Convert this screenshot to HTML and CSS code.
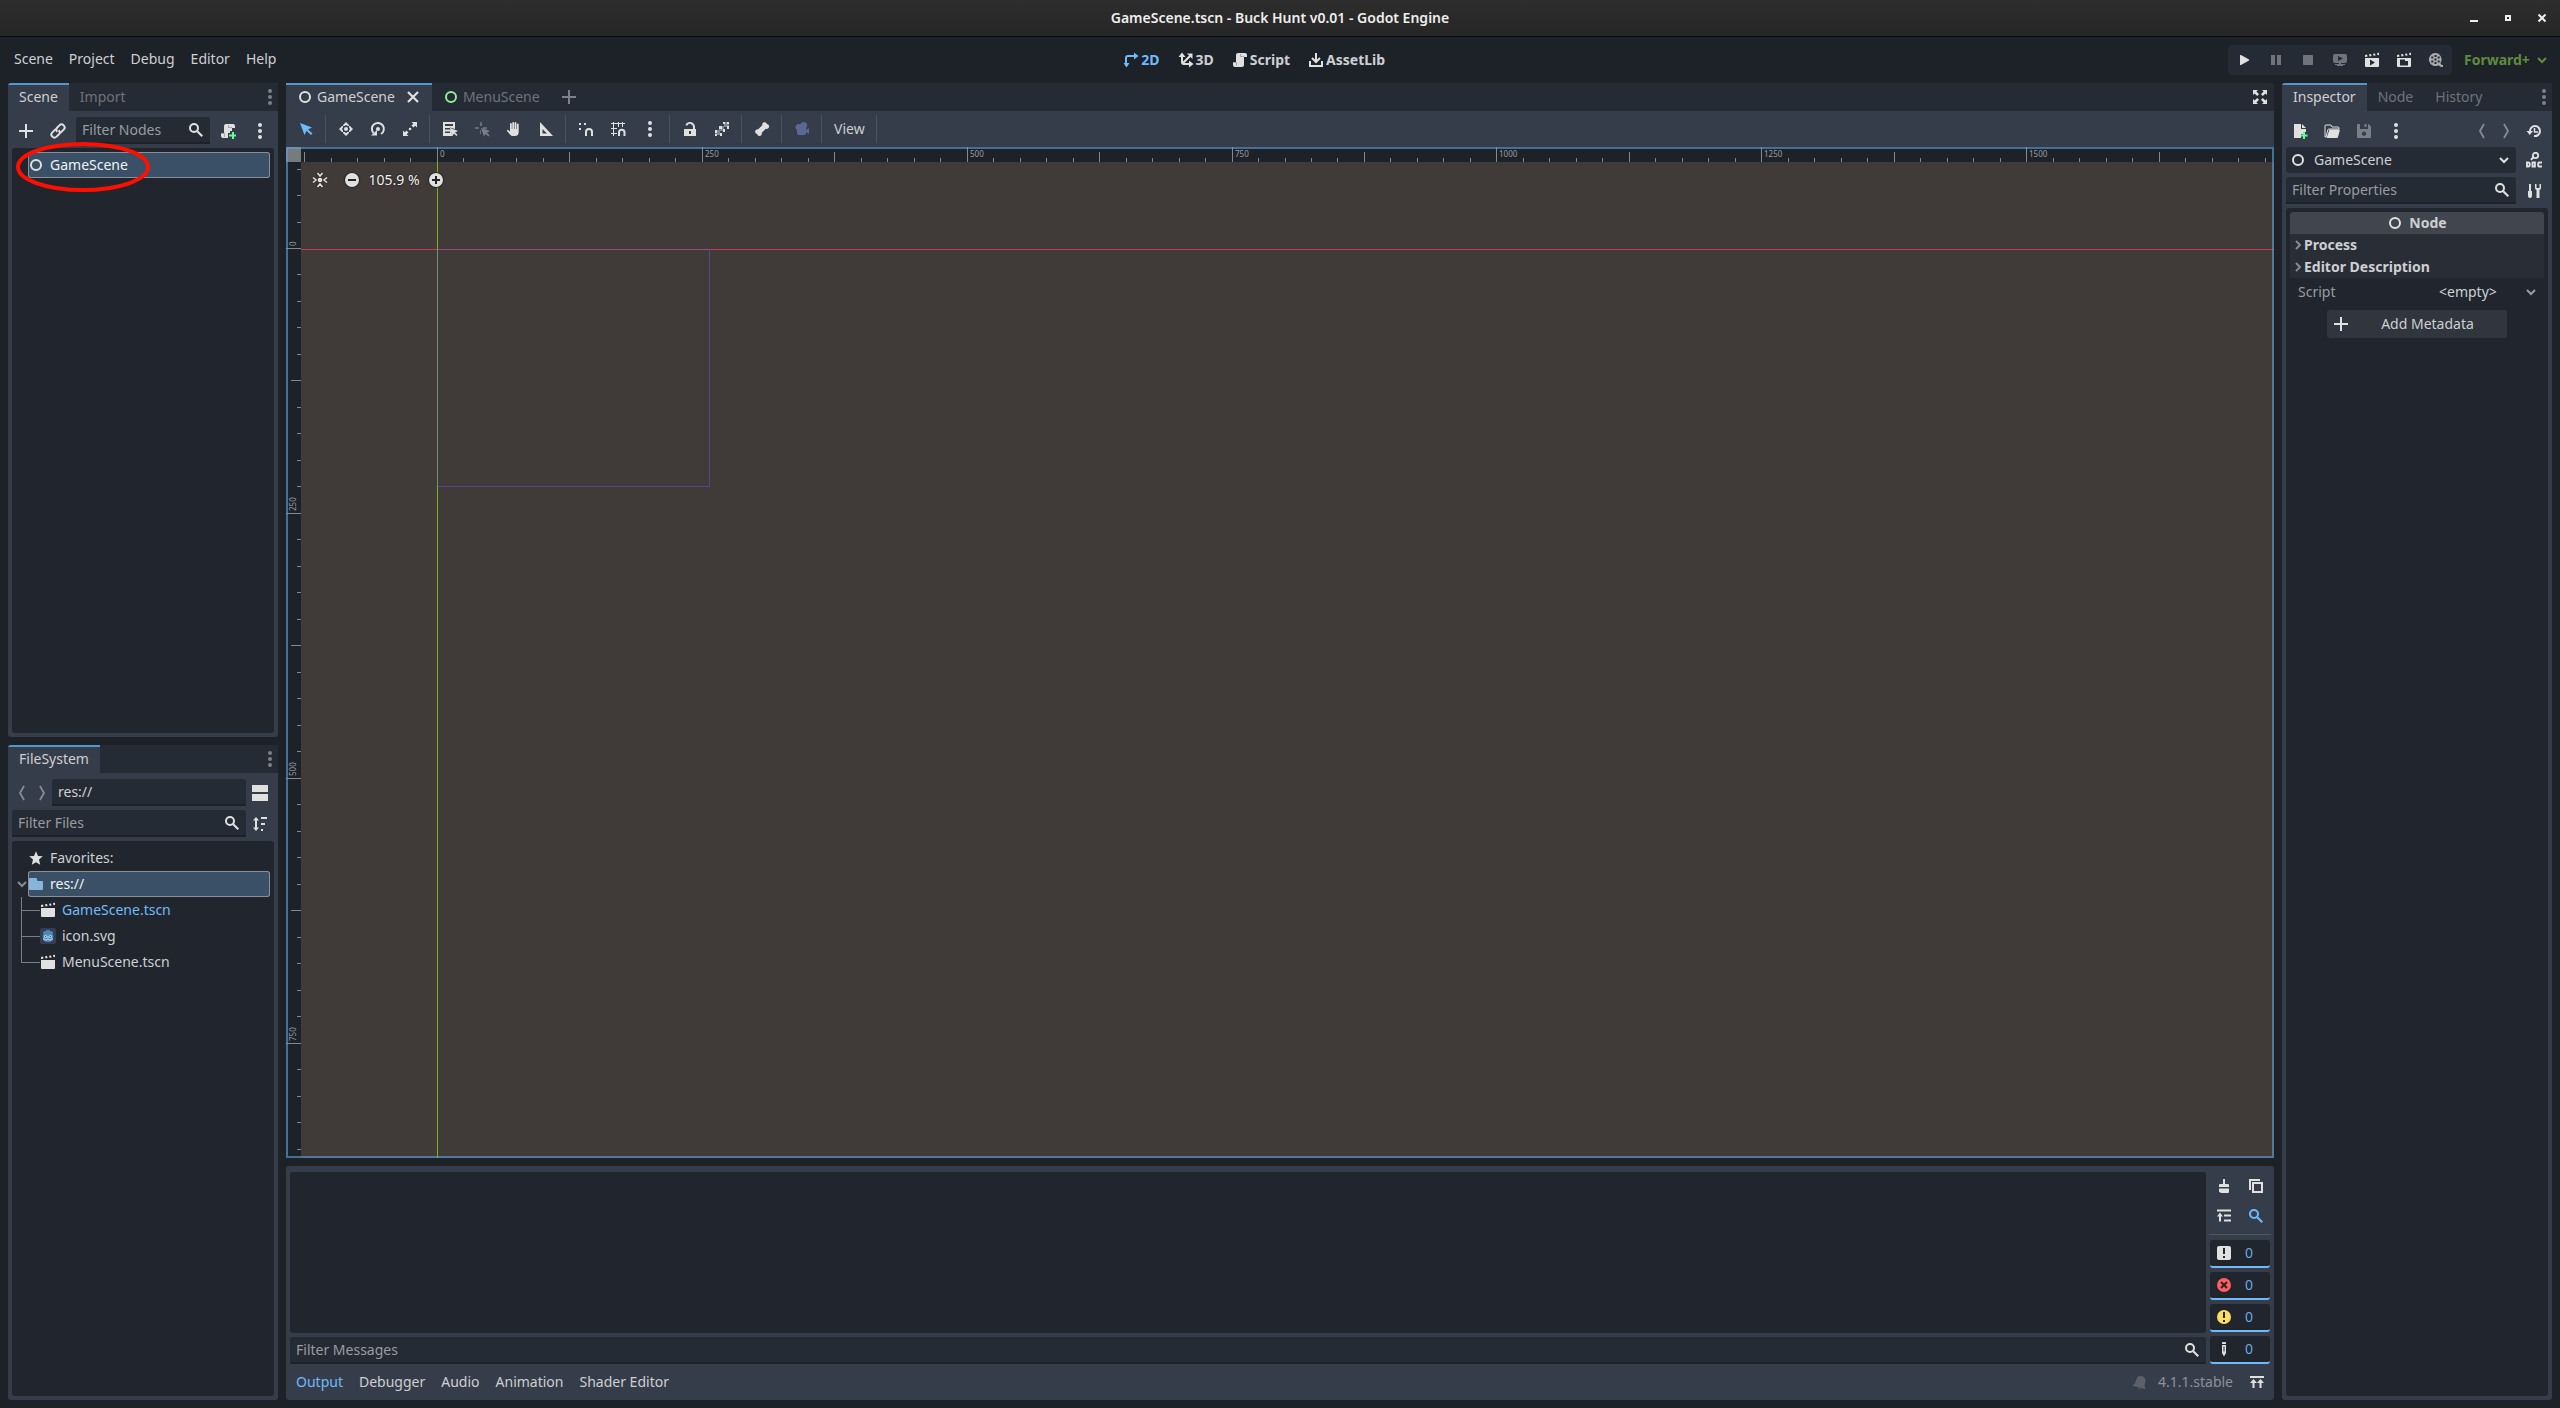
FILE: index.html
```html
<!DOCTYPE html>
<html lang="en">
<head>
<meta charset="utf-8">
<title>GameScene.tscn - Buck Hunt v0.01 - Godot Engine</title>
<link rel="stylesheet" href="styles.css">
</head>
<body>
<svg class="sprite" aria-hidden="true">
  <symbol id="i-add" viewBox="0 0 16 16"><path d="M7 1v6H1v2h6v6h2V9h6V7H9V1z"/></symbol>
  <symbol id="i-link" viewBox="0 0 16 16"><g fill="none" stroke="currentColor" stroke-width="2" transform="rotate(-45 8 8)"><path d="M8 5H3a3 3 0 0 0 0 6h3a3 3 0 0 0 3-3"/><path d="M8 11h5a3 3 0 0 0 0-6h-3a3 3 0 0 0-3 3"/></g></symbol>
  <symbol id="i-search" viewBox="0 0 16 16"><circle cx="6" cy="6" r="4" fill="none" stroke="currentColor" stroke-width="2"/><path d="M8.500 10 10 8.500 15 13.500 13.500 15z"/></symbol>
  <symbol id="i-kebab" viewBox="0 0 16 16"><circle cx="8" cy="2" r="2"/><circle cx="8" cy="8" r="2"/><circle cx="8" cy="14" r="2"/></symbol>
  <symbol id="i-node" viewBox="0 0 16 16"><circle cx="8" cy="8" r="5" fill="none" stroke="currentColor" stroke-width="2"/></symbol>
  <symbol id="i-close" viewBox="0 0 16 16"><path d="M3 3l10 10m0-10l-10 10" stroke="currentColor" stroke-width="2.200" fill="none"/></symbol>
  <symbol id="i-script" viewBox="0 0 16 16"><path d="M6 1a2 2 0 0 0-2 2v7H1v3a2 2 0 0 0 2 2h7a2 2 0 0 0 2-2V5h3V3a2 2 0 0 0-2-2z"/><path d="M4 10H1v1h3v3h1v-4zM8 2v3h4V4H9V2z" fill="#a8a8aa"/></symbol>
  <symbol id="i-scriptadd" viewBox="0 0 16 16"><path d="M6 1a2 2 0 0 0-2 2v7H1v3a2 2 0 0 0 2 2h5v-5h2V8h2V5h3V3a2 2 0 0 0-2-2z"/><path d="M4 10H1v1h3v3h1v-4zM8 2v3h4V4H9V2z" fill="#a8a8aa"/><path d="M12 9v2.500h-3v2h3V16h2v-2.500h2v-2h-2V9z" fill="#5fff97"/></symbol>
  <symbol id="i-back" viewBox="0 0 16 16"><path d="M10 1 6 8l4 7" fill="none" stroke="currentColor" stroke-width="1.800"/></symbol>
  <symbol id="i-forward" viewBox="0 0 16 16"><path d="M6 1l4 7-4 7" fill="none" stroke="currentColor" stroke-width="1.800"/></symbol>
  <symbol id="i-split" viewBox="0 0 16 16"><path d="M0 0h16v7H0zM0 9h16v7H0z"/></symbol>
  <symbol id="i-sort" viewBox="0 0 16 16"><path d="M4 1 1 4.500h2v7H1L4 15l3-3.500H5v-7h2zM9 1h6v2H9zM9 7h4v2H9zM9 13h2v2H9z"/></symbol>
  <symbol id="i-star" viewBox="0 0 16 16"><path d="M8 1.200 6 6 1.200 6.300 5 9.600 3.800 14.800 8 12.200l4.200 2.600L11 9.600l3.800-3.300L10 6z"/></symbol>
  <symbol id="i-folder" viewBox="0 0 16 16"><path d="M2 2a1 1 0 0 0-1 1v10a1 1 0 0 0 1 1h12a1 1 0 0 0 1-1V6a1 1 0 0 0-1-1h-4a1 1 0 0 1-1-1V3a1 1 0 0 0-1-1z"/></symbol>
  <symbol id="i-scene" viewBox="0 0 16 16"><path d="M1 6h14v8a1 1 0 0 1-1 1H2a1 1 0 0 1-1-1zM1 3l2-.4.600 2L1.600 5H1zM5 2.300l2-.3.600 2-2 .4zM9 1.700l2-.3.600 2-2 .3zM13 1.100l2-.3V3l-1.400.2z"/></symbol>
  <symbol id="i-godot" viewBox="0 0 16 16"><rect width="16" height="16" rx="2" fill="#363d52"/><path d="M3 4l1.500-1 1 1L6 2.200l1.500-.4L8 3l.5-1.200 1.500.4.500 1.800 1-1L13 4l-.4 2.500.6.500v4c0 2-2.500 3-5.200 3s-5.200-1-5.200-3V7l.6-.5z" fill="#478cbf"/><circle cx="5.600" cy="8.500" r="1.300" fill="#fff"/><circle cx="10.400" cy="8.500" r="1.300" fill="#fff"/><circle cx="5.700" cy="8.500" r=".7" fill="#414042"/><circle cx="10.300" cy="8.500" r=".7" fill="#414042"/><path d="M3 11h2v1h2v-1h2v1h2v-1h2" fill="none" stroke="#dbe8f2" stroke-width=".7"/><path d="M7.600 8h.8v2h-.8z" fill="#fff"/></symbol>
  <symbol id="i-down" viewBox="0 0 16 16"><path d="M4 6l4 4 4-4" fill="none" stroke="currentColor" stroke-width="2"/></symbol>
  <symbol id="i-right" viewBox="0 0 16 16"><path d="M6 4l4 4-4 4" fill="none" stroke="currentColor" stroke-width="2"/></symbol>
  <symbol id="i-2d" viewBox="0 0 16 16"><path d="M3 12V6a2 2 0 0 1 2-2h7" fill="none" stroke="currentColor" stroke-width="2"/><path d="M0.500 11h6L3.500 15.500zM11 .500v7L15.500 4z"/></symbol>
  <symbol id="i-3d" viewBox="0 0 16 16"><path d="M4 3v7a2 2 0 0 0 2 2h7M5 11l7-7" fill="none" stroke="currentColor" stroke-width="2"/><path d="M4 0.500.500 5h7zM11 8.500v7L15.500 12zM9 1.500h5.500V7z"/></symbol>
  <symbol id="i-asset" viewBox="0 0 16 16"><path d="M8 1v9M4 6l4 4 4-4M2 9v5h12V9" fill="none" stroke="currentColor" stroke-width="2"/></symbol>
  <symbol id="i-play" viewBox="0 0 16 16"><path d="M4 3.500c0-.6.500-.7 1-.4l8 4.500q.5.400 0 .8l-8 4.500c-.5.300-1 .2-1-.4z"/></symbol>
  <symbol id="i-pause" viewBox="0 0 16 16"><path d="M3 3h4v10H3zM9 3h4v10H9z"/></symbol>
  <symbol id="i-stop" viewBox="0 0 16 16"><rect x="3" y="3" width="10" height="10" rx="1"/></symbol>
  <symbol id="i-remote" viewBox="0 0 16 16"><path fill-rule="evenodd" d="M3 2a2 2 0 0 0-2 2v5a2 2 0 0 0 2 2h4v1H3v1h2v1h6v-1h2v-1H9v-1h4a2 2 0 0 0 2-2V4a2 2 0 0 0-2-2zm3 2 5 2.500L6 9z"/></symbol>
  <symbol id="i-playscene" viewBox="0 0 16 16"><path fill-rule="evenodd" d="M1 6h14v8a1 1 0 0 1-1 1H2a1 1 0 0 1-1-1zm5 1.500v6l5-3zM1 3l2-.4.600 2L1.600 5H1zM5 2.300l2-.3.600 2-2 .4zM9 1.700l2-.3.600 2-2 .3zM13 1.100l2-.3V3l-1.400.2z"/></symbol>
  <symbol id="i-playcustom" viewBox="0 0 16 16"><path fill-rule="evenodd" d="M1 6h14v8a1 1 0 0 1-1 1H2a1 1 0 0 1-1-1zm3 1.500v6h8V9H9V7.500zM1 3l2-.4.600 2L1.600 5H1zM5 2.300l2-.3.600 2-2 .4zM9 1.700l2-.3.600 2-2 .3zM13 1.100l2-.3V3l-1.400.2z"/></symbol>
  <symbol id="i-movie" viewBox="0 0 16 16"><path fill-rule="evenodd" d="M7.500 1a6.500 6.500 0 1 0 3 12.200l2.500 1.800h2v-2h-1.200l-1.400-1.800A6.500 6.500 0 0 0 7.500 1zM6.500 3h2v2h-2zM6.500 6.500h2v2h-2zM6.500 10h2v2h-2zM3.300 4.500h2v2h-2zM3.300 8.500h2v2h-2zM9.700 4.500h2v2h-2zM9.700 8.500h2v2h-2z"/></symbol>
  <symbol id="i-expand" viewBox="0 0 16 16"><path d="M1 1h5L4.400 2.600 7 5.200 5.200 7 2.600 4.400 1 6zM15 1h-5l1.600 1.600L9 5.200 10.800 7l2.600-2.600L15 6zM1 15h5l-1.600-1.600L7 10.800 5.200 9l-2.600 2.600L1 10zM15 15h-5l1.600-1.600L9 10.800 10.800 9l2.600 2.600L15 10z"/></symbol>
  <symbol id="i-select" viewBox="0 0 16 16"><path d="M2 2l4.500 12 2-4.200L13 14l1.500-1.500L10 8.500l4-2z"/></symbol>
  <symbol id="i-move" viewBox="0 0 16 16"><circle cx="8" cy="8" r="2"/><path d="M8 1 5 4v1h1.500l1.500-1 1.500 1H11V4zM1 8l3 3h1V9.500L4 8l1-1.500V5H4zM15 8l-3-3h-1v1.500l1 1.500-1 1.500V11h1zM8 15l3-3v-1H9.500L8 12l-1.500-1H5v1z"/></symbol>
  <symbol id="i-rotate" viewBox="0 0 16 16"><path d="M11 13a6 6 0 1 0-7.500-1" fill="none" stroke="currentColor" stroke-width="2"/><path d="M1 14.500h6V9z"/><circle cx="8" cy="8" r="2"/></symbol>
  <symbol id="i-scale" viewBox="0 0 16 16"><path d="M9.500 1H15v5.500l-1.800-1.800-1.700 1.800-2-2 1.800-1.700zM1 9.500V15h5.500l-1.800-1.800 1.800-1.700-2-2-1.700 1.800z"/><circle cx="8" cy="8" r="1.300"/></symbol>
  <symbol id="i-list" viewBox="0 0 16 16"><path fill-rule="evenodd" d="M1 1h12v7L8 6.500 10.500 15H1zm2 2v2h8V3zm0 4v1.500h5V7zm0 3.500V12h5v-1.500z"/><path d="M8 7l2.500 8 1.500-2.500L14.500 15l1-1.200-2.500-2.300L16 10z"/></symbol>
  <symbol id="i-pivot" viewBox="0 0 16 16"><path d="M6 1h2v4H6zM1 6h4v2H1zM9 6h4v2H9zM6 9h1v4H6z" opacity=".7"/><path d="M7 7l3 8.500 1.500-2.500 3 2.500 1-1.200-2.600-2.500L16 10z"/></symbol>
  <symbol id="i-hand" viewBox="0 0 16 16"><path d="M4 3q0-1 .9-1t.9 1v5h.5V2q0-1 .9-1t.9 1v6h.5V2q0-1 .9-1t.9 1v6h.5V3.500q0-1 .9-1t.9 1V11q0 4-4 4H7q-2 0-3-1.500L1 10q-.5-1.500 1.200-1L4 10.500z"/></symbol>
  <symbol id="i-ruler" viewBox="0 0 16 16"><path fill-rule="evenodd" d="M2 1v14h13zm2.500 7L9 12.500H4.500z"/></symbol>
  <symbol id="i-snap" viewBox="0 0 16 16"><path d="M1 2h2v2H1zM1 7h2v2H1zM6 2h2v2H6z"/><path d="M8 15v-4a3 3 0 0 1 6 0v4" fill="none" stroke="currentColor" stroke-width="2"/></symbol>
  <symbol id="i-grid" viewBox="0 0 16 16"><path d="M3.500 1v14M8.500 1v5M12.500 1v5M1 2.500h14M1 7.500h6M1 12.500h6" fill="none" stroke="currentColor"/><path d="M9 15v-4a2.800 2.800 0 0 1 5.500 0v4" fill="none" stroke="currentColor" stroke-width="2"/></symbol>
  <symbol id="i-unlock" viewBox="0 0 16 16"><path fill-rule="evenodd" d="M8 1a5 5 0 0 0-4.600 3l1.800.8A3 3 0 0 1 11 6v2H2v7h12V8h-1V6a5 5 0 0 0-5-5zM7 10h2v3H7z"/></symbol>
  <symbol id="i-group" viewBox="0 0 16 16"><path d="M5 5h5v5H5zM10 1h5v5h-5zM1 9h5v5H1z" opacity=".45"/><path d="M9 1h2v2H9zM13 1h2v2h-2zM5 5h3v3H5zM13 5h2v3h-2zM9 8h2v3H9zM1 9h2v3H1zM6 12h2v3H6zM1 13h2v2H1z"/></symbol>
  <symbol id="i-bone" viewBox="0 0 16 16"><path d="M10.500 1.200a2.300 2.300 0 0 0-2.200 3L4.200 8.300a2.500 2.500 0 0 0-3 3A2.300 2.300 0 0 0 3.200 13a2.300 2.300 0 0 0 1.700 2 2.500 2.500 0 0 0 2.900-3.200l4-4a2.500 2.500 0 0 0 3.200-3A2.300 2.300 0 0 0 12.900 3a2.300 2.300 0 0 0-2.400-1.800z"/></symbol>
  <symbol id="i-camera" viewBox="0 0 16 16"><path d="M9.500 1a3.500 3.500 0 0 0-3.300 2.500A3 3 0 1 0 3 8.800V12a2 2 0 0 0 2 2h5a2 2 0 0 0 2-2v-1l3 2V7l-3 2V7.200A3.500 3.500 0 0 0 9.500 1z"/></symbol>
  <symbol id="i-center" viewBox="0 0 16 16"><circle cx="8" cy="8" r="2.300"/><path d="M5.500 1 8 4 10.500 1M5.500 15 8 12l2.500 3M1 5.500 4 8 1 10.500M15 5.500 12 8l3 2.500" fill="none" stroke="currentColor" stroke-width="1.600"/></symbol>
  <symbol id="i-minus" viewBox="0 0 16 16"><circle cx="8" cy="8" r="7.500" fill="#222"/><circle cx="8" cy="8" r="7"/><path d="M4 7h8v2H4z" fill="#222"/></symbol>
  <symbol id="i-plus" viewBox="0 0 16 16"><circle cx="8" cy="8" r="7.500" fill="#222"/><circle cx="8" cy="8" r="7"/><path d="M4 7h3V4h2v3h3v2H9v3H7V9H4z" fill="#222"/></symbol>
  <symbol id="i-new" viewBox="0 0 16 16"><path d="M2 1h7v5h5v3h-3v2H9v4H2zM10 1l4 4h-4z"/><path d="M11 9v2.500H8.500v2H11V16h2v-2.500h2.500v-2H13V9z" fill="#5fff97"/></symbol>
  <symbol id="i-open" viewBox="0 0 16 16"><path d="M1 14V3q0-1 1-1h5l1 2h6q1 0 1 1v1H5q-1 0-1.200 1L2 14z" fill="none" stroke="currentColor"/><path d="M5.500 6.500H15q1 0 .8 1L14 14q-.2 1-1.200 1H2.500z"/></symbol>
  <symbol id="i-save" viewBox="0 0 16 16"><path fill-rule="evenodd" d="M1 2a1 1 0 0 1 1-1h10.500L15 3.500V14a1 1 0 0 1-1 1H2a1 1 0 0 1-1-1zm3-1v5h8V1h-1.500v3h-2V1zm4 7.500a2.200 2.200 0 1 0 .1 0z"/></symbol>
  <symbol id="i-history" viewBox="0 0 16 16"><path d="M4 8.500A5 5 0 1 1 8 13" fill="none" stroke="currentColor" stroke-width="2"/><path d="M.5 8h6.500L3.700 12z"/><path d="M8.500 5v4H12" fill="none" stroke="currentColor" stroke-width="1.500"/></symbol>
  <symbol id="i-doc" viewBox="0 0 16 16"><circle cx="9.500" cy="3.500" r="2.700" fill="none" stroke="currentColor" stroke-width="1.800"/><path d="M7.500 5 5 7.800" fill="none" stroke="currentColor" stroke-width="2"/><path d="M1 10.500v4h1.200q1.600 0 1.600-2t-1.600-2zM6.500 10.500h2.400v4H6.500zM16 10.500h-3q-.8 0-.8.8v2.400q0 .8.800.8H16" fill="none" stroke="currentColor" stroke-width="1.900"/></symbol>
  <symbol id="i-tools" viewBox="0 0 16 16"><path d="M4 1h1v7h1v5q0 2-2 2t-2-2V8h1V1zM9 1v4q0 1.500 1.500 2v8h3V7Q15 6.500 15 5V1h-1.500v4h-3V1z"/></symbol>
  <symbol id="i-clear" viewBox="0 0 16 16"><path d="M7 1h2v5h3q1 0 1 1v2H3V7q0-1 1-1h3zM3 10.500h10V14q0 1-1 1H5.500L3 14z"/></symbol>
  <symbol id="i-copy" viewBox="0 0 16 16"><path d="M2 12V2h10M5 5h9v9H5z" fill="none" stroke="currentColor" stroke-width="2"/></symbol>
  <symbol id="i-collapse" viewBox="0 0 16 16"><path d="M1 1.500h14v2H1zM4 4.500 1 8.500h2v5h2v-5h2zM8 6.500h7v2H8zM8 11.500h7v2H8z"/></symbol>
  <symbol id="i-msg" viewBox="0 0 16 16"><rect x="1" y="1" width="14" height="14" rx="2"/><path d="M7 3h2v6H7zM7 11h2v2H7z" fill="#21262e"/></symbol>
  <symbol id="i-error" viewBox="0 0 16 16"><circle cx="8" cy="8" r="7" fill="#ff5f5f"/><path d="M5 5l6 6m0-6l-6 6" stroke="#21262e" stroke-width="2"/></symbol>
  <symbol id="i-warn" viewBox="0 0 16 16"><circle cx="8" cy="8" r="7" fill="#ffdd65"/><path d="M7 3h2v6H7zM7 11h2v2H7z" fill="#21262e"/></symbol>
  <symbol id="i-edit" viewBox="0 0 16 16"><path d="M6 2q0-1 1-1h2q1 0 1 1v1H6z"/><path fill-rule="evenodd" d="M6 4h4v8l-2 3.500L6 12zm1.500 1.500v5h1v-5z"/></symbol>
  <symbol id="i-bell" viewBox="0 0 16 16"><path d="M9 2a4 4 0 0 0-4.500 3L3 9.500 1 11v1l12 3 .5-1-1-2 .8-4.500A4.500 4.500 0 0 0 9 2zM6 14a2 2 0 0 0 3 .8z"/></symbol>
  <symbol id="i-up" viewBox="0 0 16 16"><path d="M1 2h14v2H1zM4.500 5 1 9h2.500v5h2V9H8zM11.500 5 8 9h2.500v5h2V9H15z"/></symbol>
</svg>

<header class="titlebar">
  <h1 class="title">GameScene.tscn - Buck Hunt v0.01 - Godot Engine</h1>
  <div class="winbtns">
    <button class="winbtn" aria-label="Minimize"><svg viewBox="0 0 10 10"><path d="M1 7h8v2H1z"/></svg></button>
    <button class="winbtn" aria-label="Maximize"><svg viewBox="0 0 10 10"><path d="M3 3h4v4H3z" fill="none" stroke="currentColor" stroke-width="2"/></svg></button>
    <button class="winbtn" aria-label="Close"><svg viewBox="0 0 10 10"><path d="M1.500 1.500l7 7m0-7l-7 7" stroke="currentColor" stroke-width="2"/></svg></button>
  </div>
</header>

<div class="menurow">
  <nav class="menus" aria-label="Main menu">
    <button class="menu">Scene</button><button class="menu">Project</button><button class="menu">Debug</button><button class="menu">Editor</button><button class="menu">Help</button>
  </nav>
  <nav class="modes" aria-label="Workspace">
    <button class="mode active"><svg class="icon"><use href="#i-2d"/></svg>2D</button>
    <button class="mode"><svg class="icon"><use href="#i-3d"/></svg>3D</button>
    <button class="mode"><svg class="icon"><use href="#i-script"/></svg>Script</button>
    <button class="mode"><svg class="icon"><use href="#i-asset"/></svg>AssetLib</button>
  </nav>
  <div class="run">
    <div class="runbar">
      <button class="tool" aria-label="Play"><svg class="icon"><use href="#i-play"/></svg></button>
      <button class="tool dim" aria-label="Pause"><svg class="icon"><use href="#i-pause"/></svg></button>
      <button class="tool dim" aria-label="Stop"><svg class="icon"><use href="#i-stop"/></svg></button>
      <button class="tool dim" aria-label="Remote debug"><svg class="icon"><use href="#i-remote"/></svg></button>
      <button class="tool" aria-label="Play scene"><svg class="icon"><use href="#i-playscene"/></svg></button>
      <button class="tool" aria-label="Play custom scene"><svg class="icon"><use href="#i-playcustom"/></svg></button>
      <button class="tool soft" aria-label="Movie maker"><svg class="icon"><use href="#i-movie"/></svg></button>
    </div>
    <label class="renderer"><select aria-label="Renderer"><option>Forward+</option></select><svg class="icon"><use href="#i-down"/></svg></label>
  </div>
</div>

<main class="workspace">
  <div class="col side">
    <section class="dock scene-dock">
      <div class="tabs">
        <button class="tab active">Scene</button><button class="tab">Import</button>
        <button class="tabmenu" aria-label="Dock options"><svg class="icon"><use href="#i-kebab"/></svg></button>
      </div>
      <div class="body">
        <div class="bar">
          <button class="tool" aria-label="Add node"><svg class="icon"><use href="#i-add"/></svg></button>
          <button class="tool" aria-label="Instantiate scene"><svg class="icon"><use href="#i-link"/></svg></button>
          <label class="field"><input type="text" placeholder="Filter Nodes" aria-label="Filter Nodes"><svg class="icon"><use href="#i-search"/></svg></label>
          <button class="tool" aria-label="Attach script"><svg class="icon"><use href="#i-scriptadd"/></svg></button>
          <button class="tool" aria-label="More"><svg class="icon"><use href="#i-kebab"/></svg></button>
        </div>
        <ul class="tree inset">
          <li class="row root selected"><svg class="icon"><use href="#i-node"/></svg>GameScene</li>
        </ul>
      </div>
    </section>
    <section class="dock files-dock">
      <div class="tabs">
        <button class="tab active">FileSystem</button>
        <button class="tabmenu" aria-label="Dock options"><svg class="icon"><use href="#i-kebab"/></svg></button>
      </div>
      <div class="body">
        <div class="bar tight">
          <button class="nav" aria-label="Back"><svg class="icon"><use href="#i-back"/></svg></button>
          <button class="nav" aria-label="Forward"><svg class="icon"><use href="#i-forward"/></svg></button>
          <label class="field"><input type="text" value="res://" aria-label="Path"></label>
          <button class="tool" aria-label="Split mode"><svg class="icon"><use href="#i-split"/></svg></button>
        </div>
        <div class="bar tight">
          <label class="field"><input type="text" placeholder="Filter Files" aria-label="Filter Files"><svg class="icon"><use href="#i-search"/></svg></label>
          <button class="tool" aria-label="Sort"><svg class="icon"><use href="#i-sort"/></svg></button>
        </div>
        <ul class="tree inset">
          <li class="row root"><svg class="icon"><use href="#i-star"/></svg>Favorites:</li>
          <li class="branch">
            <div class="folder"><svg class="icon arrow"><use href="#i-down"/></svg><div class="row selected"><svg class="icon blue"><use href="#i-folder"/></svg>res://</div></div>
            <ul class="children">
              <li class="row child open"><svg class="icon"><use href="#i-scene"/></svg>GameScene.tscn</li>
              <li class="row child"><svg class="icon"><use href="#i-godot"/></svg>icon.svg</li>
              <li class="row child"><svg class="icon"><use href="#i-scene"/></svg>MenuScene.tscn</li>
            </ul>
          </li>
        </ul>
      </div>
    </section>
  </div>

  <div class="col center">
    <section class="editor">
      <div class="tabs">
        <button class="tab scenetab active"><svg class="icon"><use href="#i-node"/></svg>GameScene<svg class="icon x"><use href="#i-close"/></svg></button>
        <button class="tab scenetab"><svg class="icon green"><use href="#i-node"/></svg>MenuScene</button>
        <button class="newtab" aria-label="New scene"><svg class="icon"><use href="#i-add"/></svg></button>
        <button class="tool fullscreen" aria-label="Distraction free mode"><svg class="icon"><use href="#i-expand"/></svg></button>
      </div>
      <div class="toolbar">
        <button class="tool on" aria-label="Select"><svg class="icon"><use href="#i-select"/></svg></button>
        <i class="sep"></i>
        <button class="tool" aria-label="Move"><svg class="icon"><use href="#i-move"/></svg></button>
        <button class="tool" aria-label="Rotate"><svg class="icon"><use href="#i-rotate"/></svg></button>
        <button class="tool" aria-label="Scale"><svg class="icon"><use href="#i-scale"/></svg></button>
        <i class="sep"></i>
        <button class="tool" aria-label="List select"><svg class="icon"><use href="#i-list"/></svg></button>
        <button class="tool dim" aria-label="Pivot"><svg class="icon"><use href="#i-pivot"/></svg></button>
        <button class="tool" aria-label="Pan"><svg class="icon"><use href="#i-hand"/></svg></button>
        <button class="tool" aria-label="Ruler"><svg class="icon"><use href="#i-ruler"/></svg></button>
        <i class="sep"></i>
        <button class="tool" aria-label="Smart snap"><svg class="icon"><use href="#i-snap"/></svg></button>
        <button class="tool" aria-label="Grid snap"><svg class="icon"><use href="#i-grid"/></svg></button>
        <button class="tool" aria-label="Snapping options"><svg class="icon"><use href="#i-kebab"/></svg></button>
        <i class="sep"></i>
        <button class="tool" aria-label="Lock"><svg class="icon"><use href="#i-unlock"/></svg></button>
        <button class="tool" aria-label="Group"><svg class="icon"><use href="#i-group"/></svg></button>
        <i class="sep"></i>
        <button class="tool" aria-label="Skeleton options"><svg class="icon"><use href="#i-bone"/></svg></button>
        <i class="sep"></i>
        <button class="tool cam" aria-label="Override camera"><svg class="icon"><use href="#i-camera"/></svg></button>
        <i class="sep"></i>
        <button class="view">View</button>
        <i class="sep"></i>
      </div>
      <div class="viewport" id="viewport">
        <svg class="stage" id="stage" aria-hidden="true"></svg>
        <div class="zoombar">
          <button class="tool reset" aria-label="Center view"><svg class="icon"><use href="#i-center"/></svg></button>
          <button class="tool" aria-label="Zoom out"><svg class="icon"><use href="#i-minus"/></svg></button>
          <button class="zoomlevel">105.9 %</button>
          <button class="tool" aria-label="Zoom in"><svg class="icon"><use href="#i-plus"/></svg></button>
        </div>
      </div>
    </section>

    <section class="bottom">
      <div class="output">
        <div class="outmain">
          <div class="log inset"></div>
          <label class="field"><input type="text" placeholder="Filter Messages" aria-label="Filter Messages"><svg class="icon"><use href="#i-search"/></svg></label>
        </div>
        <div class="outside">
          <div class="outtools">
            <button class="tool" aria-label="Clear"><svg class="icon"><use href="#i-clear"/></svg></button>
            <button class="tool" aria-label="Copy"><svg class="icon"><use href="#i-copy"/></svg></button>
            <button class="tool" aria-label="Collapse"><svg class="icon"><use href="#i-collapse"/></svg></button>
            <button class="tool on" aria-label="Show search"><svg class="icon"><use href="#i-search"/></svg></button>
          </div>
          <hr class="line">
          <button class="count"><svg class="icon"><use href="#i-msg"/></svg>0</button>
          <button class="count"><svg class="icon"><use href="#i-error"/></svg>0</button>
          <button class="count"><svg class="icon"><use href="#i-warn"/></svg>0</button>
          <button class="count"><svg class="icon"><use href="#i-edit"/></svg>0</button>
        </div>
      </div>
      <div class="bottombar">
        <button class="menu active">Output</button><button class="menu">Debugger</button><button class="menu">Audio</button><button class="menu">Animation</button><button class="menu">Shader Editor</button>
        <span class="status"><svg class="icon bell"><use href="#i-bell"/></svg><button class="version">4.1.1.stable</button><button class="tool" aria-label="Expand bottom panel"><svg class="icon"><use href="#i-up"/></svg></button></span>
      </div>
    </section>
  </div>

  <div class="col side">
    <section class="dock inspector">
      <div class="tabs">
        <button class="tab active">Inspector</button><button class="tab">Node</button><button class="tab">History</button>
        <button class="tabmenu" aria-label="Dock options"><svg class="icon"><use href="#i-kebab"/></svg></button>
      </div>
      <div class="body">
        <div class="bar insptools">
          <button class="tool" aria-label="New resource"><svg class="icon"><use href="#i-new"/></svg></button>
          <button class="tool" aria-label="Load resource"><svg class="icon"><use href="#i-open"/></svg></button>
          <button class="tool dim" aria-label="Save resource"><svg class="icon"><use href="#i-save"/></svg></button>
          <button class="tool" aria-label="More"><svg class="icon"><use href="#i-kebab"/></svg></button>
          <span class="grow"></span>
          <button class="nav" aria-label="Previous object"><svg class="icon"><use href="#i-back"/></svg></button>
          <button class="nav" aria-label="Next object"><svg class="icon"><use href="#i-forward"/></svg></button>
          <button class="tool" aria-label="Object history"><svg class="icon"><use href="#i-history"/></svg></button>
        </div>
        <div class="bar insprow">
          <label class="picker"><svg class="icon"><use href="#i-node"/></svg><select aria-label="Edited object"><option>GameScene</option></select><svg class="icon"><use href="#i-down"/></svg></label>
          <button class="tool" aria-label="Open documentation"><svg class="icon"><use href="#i-doc"/></svg></button>
        </div>
        <div class="bar">
          <label class="field"><input type="text" placeholder="Filter Properties" aria-label="Filter Properties"><svg class="icon"><use href="#i-search"/></svg></label>
          <button class="tool" aria-label="Manage properties"><svg class="icon"><use href="#i-tools"/></svg></button>
        </div>
        <div class="props inset">
          <h2 class="class"><svg class="icon"><use href="#i-node"/></svg>Node</h2>
          <button class="group"><svg class="icon"><use href="#i-right"/></svg>Process</button>
          <button class="group"><svg class="icon"><use href="#i-right"/></svg>Editor Description</button>
          <label class="prop"><span class="name">Script</span><select><option>&lt;empty&gt;</option></select><svg class="icon"><use href="#i-down"/></svg></label>
          <button class="meta"><svg class="icon"><use href="#i-add"/></svg><span>Add Metadata</span></button>
        </div>
      </div>
    </section>
  </div>
</main>

<svg class="marker" viewBox="0 0 134 50" aria-hidden="true"><ellipse cx="67" cy="25" rx="65" ry="23"/></svg>
<script src="viewport.js"></script>
</body>
</html>
```
FILE: styles.css
```css
* { box-sizing: border-box; }

body {
  margin: 0;
  height: 100vh;
  display: flex;
  flex-direction: column;
  background: #1d2229;
  color: #cdcfd2;
  font: 14px/20px "Noto Sans", sans-serif;
  overflow: hidden;
}

button, input, select {
  margin: 0;
  padding: 0;
  border: 0;
  background: none;
  color: inherit;
  font: inherit;
  outline: none;
  appearance: none;
}

ul { list-style: none; margin: 0; padding: 0; }
.sprite { display: none; }

.icon {
  flex: none;
  display: block;
  width: 16px;
  height: 16px;
  fill: currentColor;
  color: #e0e0e0;
}

/* Window title */
.titlebar {
  flex: none;
  height: 37px;
  display: grid;
  grid-template-columns: 1fr auto 1fr;
  align-items: center;
  background: linear-gradient(#2d2d2d, #262626);
  border-bottom: 1px solid #0a0a0a;
}
.title { grid-column: 2; margin: 0; font-size: 14px; font-weight: 600; line-height: 20px; color: #eeeeec; }
.winbtns { justify-self: end; display: flex; gap: 24px; padding-right: 13px; }
.winbtn { width: 10px; height: 10px; color: #eeeeec; }
.winbtn svg { display: block; width: 10px; height: 10px; fill: currentColor; }

/* Menu row */
.menurow {
  flex: none;
  height: 46px;
  display: flex;
  justify-content: space-between;
  align-items: center;
  padding: 0 10px 0 6px;
}
.menu { height: 28px; padding: 0 8px; }
.menu.active { color: #70bafa; }
.menus { padding-bottom: 2px; }
.modes { display: flex; gap: 18px; padding-right: 4px; font-weight: 700; }
.mode { display: flex; align-items: center; gap: 2px; font-weight: 700; }
.mode.active, .mode.active .icon { color: #70bafa; }
.run { display: flex; align-items: center; gap: 12px; }
.runbar { display: flex; gap: 4px; height: 30px; align-items: center; padding: 0 2px; border-radius: 3px; background: #252b34; }
.renderer { display: flex; align-items: center; gap: 4px; color: #5d8c3f; font-weight: 700; }
.renderer .icon { color: #5d8c3f; }

.tool { flex: none; width: 28px; height: 28px; display: grid; place-items: center; }
.nav { flex: none; width: 20px; height: 28px; display: grid; place-items: center; }
.nav .icon { color: #868a92; }
.dim { opacity: .4; }
.soft { opacity: .7; }
.on .icon { color: #70bafa; }

/* Columns and docks */
.workspace {
  flex: 1;
  min-height: 0;
  display: grid;
  grid-template-columns: 270px 1fr 270px;
  gap: 8px;
  padding: 0 8px 8px;
}
.col { min-width: 0; min-height: 0; display: flex; flex-direction: column; gap: 8px; }
.dock { flex: 1; min-height: 0; display: flex; flex-direction: column; border-radius: 3px; overflow: hidden; background: #363d4a; }
.scene-dock { flex: 654 1 0; }
.files-dock { flex: 655 1 0; }

.tabs { flex: none; height: 28px; display: flex; background: #252b34; border-radius: 3px 3px 0 0; }
.tab { height: 28px; padding: 0 11px; color: #6e737b; }
.tab.active { color: #cdcfd2; background: #363d4a; border-top: 2px solid #5596cc; padding-bottom: 2px; }
.tabmenu { margin-left: auto; width: 16px; display: grid; place-items: center; }
.tabmenu .icon { color: #7d8188; }

.body { flex: 1; min-height: 0; display: flex; flex-direction: column; padding: 6px 4px 4px; }
.bar { flex: none; display: flex; align-items: center; gap: 4px; height: 27px; margin-bottom: 4px; }
.tight { gap: 0; }
.field {
  flex: 1;
  min-width: 0;
  height: 27px;
  display: flex;
  align-items: center;
  padding: 0 6px;
  background: #252b34;
  border-bottom: 2px solid #1d2229;
  border-radius: 3px 3px 0 0;
}
.field input { flex: 1; min-width: 0; height: 24px; }
.field input::placeholder { color: #999ca1; opacity: 1; }
.inset { background: #21262e; border-radius: 3px; }

/* Trees */
.tree { flex: 1; padding: 4px; }
.row { height: 26px; display: flex; align-items: center; gap: 6px; }
.root { margin-left: 12px; }
.row.selected { flex: 1; background: #395067; box-shadow: inset 0 0 0 1px #8b9096; border-radius: 3px; color: #f0f1f3; }
.folder { display: flex; align-items: center; }
.folder .arrow { margin: 0 -2px; color: #868a92; }
.blue { color: #89b5dc; }
.children { margin-left: 5px; }
.child { position: relative; padding-left: 19px; }
.child::before { content: ""; position: absolute; left: 0; top: -14px; width: 18px; height: 27px; border: solid #7b7f86; border-width: 0 0 1px 1px; }
.child.open { color: #70bafa; }
.child.open::before { top: 0; height: 13px; }

/* 2D editor */
.editor { flex: 1; min-height: 0; display: flex; flex-direction: column; }
.scenetab { display: flex; align-items: center; gap: 4px; }
.scenetab .x { margin-left: 6px; }
.green { color: #8eef97; }
.newtab { width: 36px; display: grid; place-items: center; }
.newtab .icon { color: #7d8188; }
.fullscreen { margin-left: auto; }
.toolbar { flex: none; height: 36px; display: flex; align-items: center; gap: 4px; padding: 0 6px; background: #363d4a; }
.sep { flex: none; width: 4px; height: 28px; background: linear-gradient(90deg, transparent 1px, #4b515d 1px, #4b515d 2px, transparent 2px); }
.cam .icon { color: #5c6894; }
.view { height: 28px; padding: 0 6px; }

.viewport { flex: 1; min-height: 0; position: relative; background: #403b38; }
.viewport::after { content: ""; position: absolute; inset: 0; border: 2px solid rgba(93, 160, 216, .62); pointer-events: none; }
.stage { position: absolute; inset: 0; width: 100%; height: 100%; shape-rendering: crispEdges; }
.stage text { font: 8px "Noto Sans", sans-serif; fill: #9a9da1; }
.zoombar { position: absolute; left: 20px; top: 19px; display: flex; align-items: center; }
.zoombar .reset { margin-right: 4px; }
.zoombar .icon { filter: drop-shadow(0 0 1px #222); }
.zoomlevel { width: 56px; color: #f0f0f0; text-shadow: 0 0 2px #111; }

/* Bottom panel */
.bottom { flex: none; display: flex; flex-direction: column; padding: 6px 3px 0 4px; border-radius: 3px; background: #363d4a; }
.output { display: flex; gap: 3px; }
.outmain { flex: 1; display: flex; flex-direction: column; gap: 4px; }
.outmain .field { flex: none; }
.log { flex: 1; }
.outside { width: 62px; display: flex; flex-direction: column; align-items: center; gap: 4px; }
.outtools { display: grid; grid-template-columns: 28px 28px; gap: 2px 4px; }
.line { width: 62px; height: 1px; margin: 0 0 1px; border: 0; background: #4f5561; }
.count {
  width: 60px;
  height: 28px;
  display: flex;
  align-items: center;
  gap: 13px;
  padding: 0 6px;
  background: #21262e;
  border-bottom: 2px solid #70bafa;
  border-radius: 3px;
  color: #66a9e2;
}
.bottombar { height: 36px; display: flex; align-items: center; }
.bottombar .menu:first-child { padding-left: 6px; }
.status { margin-left: auto; display: flex; align-items: center; gap: 10px; }
.version { color: #8d9198; }
.bell { color: #5b606a; }

/* Inspector */
.insptools { height: 28px; margin-bottom: 2px; }
.insprow { height: 26px; }
.grow { flex: 1; }
.picker { flex: 1; height: 26px; display: flex; align-items: center; gap: 8px; padding: 0 4px; background: #252b34; border-radius: 3px; }
.picker select { flex: 1; }
.props { flex: 1; padding: 4px; }
.class { margin: 0; height: 22px; display: flex; align-items: center; justify-content: center; gap: 6px; font-size: 14px; font-weight: 700; line-height: 20px; background: #41454e; border-radius: 3px 3px 0 0; }
.group { width: 100%; height: 22px; display: flex; align-items: center; padding-left: 2px; font-weight: 700; background: #292d36; }
.group .icon { margin: 0 -2px; color: #868a92; }
.prop { height: 28px; display: flex; align-items: center; padding: 0 5px 0 8px; }
.prop .name { flex: 1; color: #999ca1; }
.prop select { width: 84px; }
.prop .icon { color: #999ca1; }
.meta { width: 71%; height: 28px; display: flex; align-items: center; margin: 4px auto 0; padding: 0 6px; background: #31353e; border-radius: 3px; }
.meta span { flex: 1; text-align: center; padding-left: 5px; }

/* Hand-drawn highlight round the root node */
.marker { position: absolute; left: 16px; top: 142px; width: 134px; height: 50px; fill: none; stroke: #ff0f00; stroke-width: 4; pointer-events: none; }
```
FILE: viewport.js
```js
// Draws the rulers, the axes and the project's window rectangle.
const RULER = 15;
const ORIGIN = { x: 151.42, y: 101.5 };
const ZOOM = 1.0595;
const STEP = 25;
const GAME = { w: 256, h: 224 };

const stage = document.getElementById("stage");

function rect(x, y, w, h, fill) {
  return `<rect x="${x}" y="${y}" width="${w}" height="${h}" fill="${fill}"/>`;
}

function draw() {
  const { width, height } = document.getElementById("viewport").getBoundingClientRect();
  const ox = Math.floor(ORIGIN.x);
  const oy = Math.floor(ORIGIN.y) + 1;
  const gw = Math.ceil(GAME.w * ZOOM);
  const gh = Math.floor(GAME.h * ZOOM);
  let out = "";

  out += rect(RULER, oy, width, 1, "#cc3a52");
  out += rect(ox, RULER, 1, height, "#7fb01c");
  out += rect(ox, oy, gw, 1, "#a04588");
  out += rect(ox, oy, 1, gh, "#748f7c");
  out += rect(ox + gw, oy, 1, gh, "#4d4b8e");
  out += rect(ox + 1, oy + gh, gw, 1, "#4d4b8e");

  out += rect(0, 0, width, RULER, "#1d2229");
  out += rect(0, 0, RULER, height, "#1d2229");

  const tick = "#85888c";
  const length = (n) => (n % 10 === 0 ? RULER : n % 5 === 0 ? 10 : 4);
  for (let n = -20; n < 400; n++) {
    const len = length(n);
    const x = Math.floor(ORIGIN.x + n * STEP * ZOOM);
    if (x >= RULER && x < width) {
      out += rect(x, RULER - len, 1, len, tick);
      if (len === RULER) out += `<text x="${x + 3}" y="10">${n * STEP}</text>`;
    }
    const y = Math.floor(ORIGIN.y + n * STEP * ZOOM);
    if (y >= RULER && y < height) {
      out += rect(RULER - len, y, len, 1, tick);
      if (len === RULER) out += `<text transform="translate(10 ${y - 2}) rotate(-90)">${n * STEP}</text>`;
    }
  }
  out += rect(0, 0, RULER, RULER, "#777a7e");
  stage.innerHTML = out;
}

draw();
window.addEventListener("resize", draw);
```
